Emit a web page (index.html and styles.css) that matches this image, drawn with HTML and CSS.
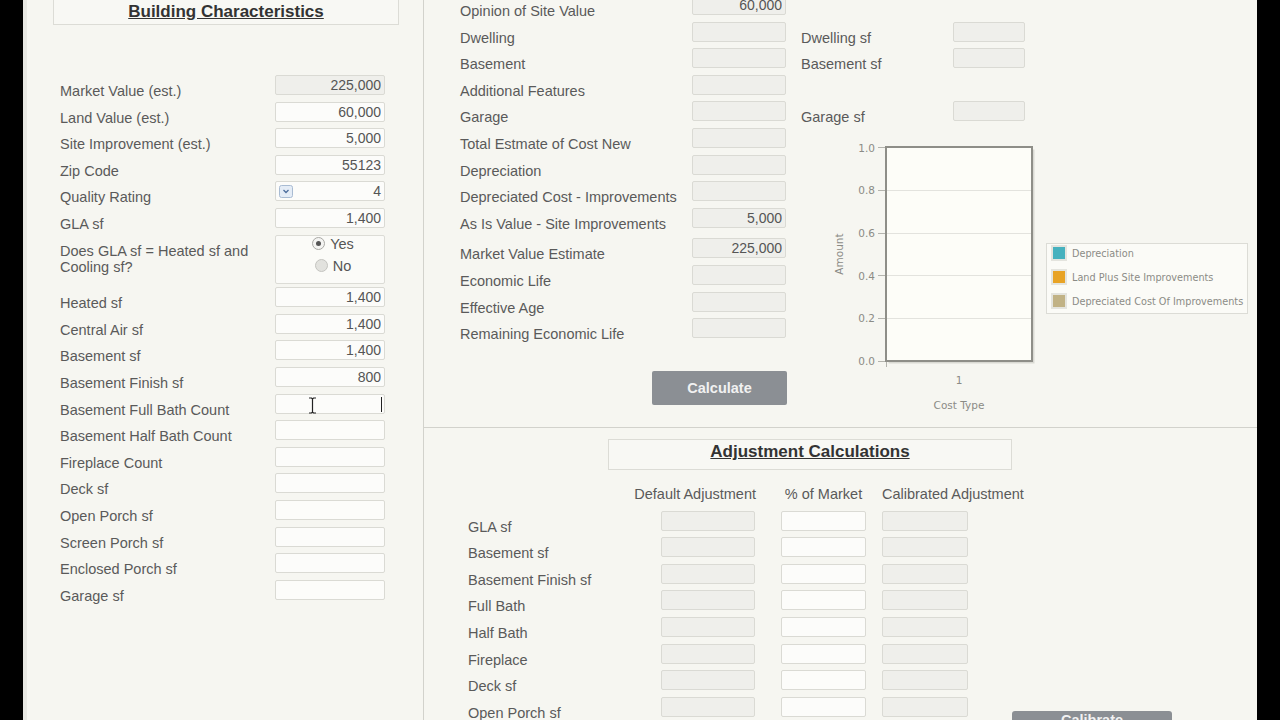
FILE: index.html
```html
<!DOCTYPE html>
<html lang="en">
<head>
    <meta charset="UTF-8">
    <meta name="viewport" content="width=device-width, initial-scale=1.0">
    <title>Cost Approach</title>
    <link rel="stylesheet" href="styles.css">
</head>
<body>

<div class="page">

    <!-- Building characteristics -->
    <div class="left-panel">
        <div class="section-title building-title"><span>Building Characteristics</span></div>

        <div class="form-grid building">
            <label>Market Value (est.)</label><input class="ro" value="225,000" readonly>
            <label>Land Value (est.)</label><input value="60,000">
            <label>Site Improvement (est.)</label><input value="5,000">
            <label>Zip Code</label><input value="55123">
            <label>Quality Rating</label>
            <div class="select">
                <svg class="dd-icon" width="14" height="13" viewBox="0 0 14 13">
                    <rect x="0.5" y="0.5" width="13" height="12" rx="2" fill="#e4ecf6" stroke="#a8bbd2"/>
                    <path d="M4.5 5 L7 7.5 L9.5 5" fill="none" stroke="#4b6c9c" stroke-width="1.3"/>
                </svg>
                <span>4</span>
            </div>
            <label>GLA sf</label><input value="1,400">
            <label class="wrap">Does GLA sf = Heated sf and Cooling sf?</label>
            <div class="radio-box">
                <div class="radio-item"><span class="radio checked"></span>Yes</div>
                <div class="radio-item"><span class="radio"></span>No</div>
            </div>
            <label>Heated sf</label><input value="1,400">
            <label>Central Air sf</label><input value="1,400">
            <label>Basement sf</label><input value="1,400">
            <label>Basement Finish sf</label><input value="800">
            <label>Basement Full Bath Count</label>
            <div class="field-wrap">
                <input value="">
                <span class="caret"></span>
                <svg class="ibeam" width="9" height="17" viewBox="0 0 9 17">
                    <path d="M1 1 H3.5 L4.5 2 L5.5 1 H8 M4.5 2 V15 M1 16 H3.5 L4.5 15 L5.5 16 H8" fill="none" stroke="#222" stroke-width="1.2"/>
                </svg>
            </div>
            <label>Basement Half Bath Count</label><input value="">
            <label>Fireplace Count</label><input value="">
            <label>Deck sf</label><input value="">
            <label>Open Porch sf</label><input value="">
            <label>Screen Porch sf</label><input value="">
            <label>Enclosed Porch sf</label><input value="">
            <label>Garage sf</label><input value="">
        </div>
    </div>

    <div class="main">

        <!-- Cost approach -->
        <div class="main-top">
            <div class="cost-col">
                <div class="form-grid cost">
                    <label>Opinion of Site Value</label><input class="ro" value="60,000" readonly>
                    <label>Dwelling</label><input class="ro" readonly>
                    <label>Basement</label><input class="ro" readonly>
                    <label>Additional Features</label><input class="ro" readonly>
                    <label>Garage</label><input class="ro" readonly>
                    <label>Total Estmate of Cost New</label><input class="ro" readonly>
                    <label>Depreciation</label><input class="ro" readonly>
                    <label>Depreciated Cost - Improvements</label><input class="ro" readonly>
                    <label>As Is Value - Site Improvements</label><input class="ro" value="5,000" readonly>
                    <label class="spaced">Market Value Estimate</label><input class="ro spaced" value="225,000" readonly>
                    <label>Economic Life</label><input class="ro" readonly>
                    <label>Effective Age</label><input class="ro" readonly>
                    <label>Remaining Economic Life</label><input class="ro" readonly>
                </div>
                <button class="btn calc-btn">Calculate</button>
            </div>

            <div class="sf-col">
                <div class="form-grid sf">
                    <span class="blank"></span>
                    <label>Dwelling sf</label><input class="ro" readonly>
                    <label>Basement sf</label><input class="ro" readonly>
                    <span class="blank"></span>
                    <label>Garage sf</label><input class="ro" readonly>
                </div>

                <svg class="chart" width="456" height="285" viewBox="0 0 456 285">
                    <g transform="translate(-801,-135)">
                        <rect x="888.5" y="149.5" width="146" height="214" fill="#d9d9d3"/>
                        <rect x="886" y="147" width="146" height="214" fill="#fdfdf8" stroke="#8e8e88" stroke-width="2"/>
                        <g stroke="#e3e3de" stroke-width="1">
                            <line x1="887" y1="190.5" x2="1031" y2="190.5"/>
                            <line x1="887" y1="233.5" x2="1031" y2="233.5"/>
                            <line x1="887" y1="275.5" x2="1031" y2="275.5"/>
                            <line x1="887" y1="318.5" x2="1031" y2="318.5"/>
                        </g>
                        <g stroke="#b4b4ae" stroke-width="1">
                            <line x1="878" y1="147.5" x2="885" y2="147.5"/>
                            <line x1="878" y1="190.5" x2="885" y2="190.5"/>
                            <line x1="878" y1="233.5" x2="885" y2="233.5"/>
                            <line x1="878" y1="275.5" x2="885" y2="275.5"/>
                            <line x1="878" y1="318.5" x2="885" y2="318.5"/>
                            <line x1="878" y1="361.5" x2="885" y2="361.5"/>
                            <line x1="886.5" y1="362" x2="886.5" y2="367"/>
                        </g>
                        <g class="axis-text" text-anchor="end">
                            <text x="875" y="152">1.0</text>
                            <text x="875" y="194">0.8</text>
                            <text x="875" y="237">0.6</text>
                            <text x="875" y="280">0.4</text>
                            <text x="875" y="322">0.2</text>
                            <text x="875" y="365">0.0</text>
                        </g>
                        <g class="axis-text" text-anchor="middle">
                            <text x="959" y="384">1</text>
                            <text x="959" y="409">Cost Type</text>
                            <text transform="translate(843,254) rotate(-90)">Amount</text>
                        </g>

                        <rect x="1046.5" y="243.5" width="201" height="70" fill="#fbfbf7" stroke="#dcdcd6"/>
                        <rect x="1051" y="245" width="16" height="16" fill="#e4e4de"/>
                        <rect x="1053" y="247" width="12" height="12" fill="#46b1be"/>
                        <rect x="1051" y="269" width="16" height="16" fill="#e4e4de"/>
                        <rect x="1053" y="271" width="12" height="12" fill="#e8a325"/>
                        <rect x="1051" y="293" width="16" height="16" fill="#e4e4de"/>
                        <rect x="1053" y="295" width="12" height="12" fill="#c1b285"/>
                        <g class="legend-text">
                            <text x="1072" y="257">Depreciation</text>
                            <text x="1072" y="281">Land Plus Site Improvements</text>
                            <text x="1072" y="305">Depreciated Cost Of Improvements</text>
                        </g>
                    </g>
                </svg>
            </div>
        </div>

        <!-- Adjustments -->
        <div class="main-bottom">
            <div class="section-title adj-title"><span>Adjustment Calculations</span></div>

            <div class="adj-grid">
                <span></span>
                <div class="col-head head-default"><span>Default Adjustment</span></div>
                <div class="col-head head-pct">% of Market</div>
                <div class="col-head head-cal">Calibrated Adjustment</div>
                <span></span>

                <label>GLA sf</label><input class="ro" readonly><input class="pct"><input class="ro cal" readonly><span></span>
                <label>Basement sf</label><input class="ro" readonly><input class="pct"><input class="ro cal" readonly><span></span>
                <label>Basement Finish sf</label><input class="ro" readonly><input class="pct"><input class="ro cal" readonly><span></span>
                <label>Full Bath</label><input class="ro" readonly><input class="pct"><input class="ro cal" readonly><span></span>
                <label>Half Bath</label><input class="ro" readonly><input class="pct"><input class="ro cal" readonly><span></span>
                <label>Fireplace</label><input class="ro" readonly><input class="pct"><input class="ro cal" readonly><span></span>
                <label>Deck sf</label><input class="ro" readonly><input class="pct"><input class="ro cal" readonly><span></span>
                <label>Open Porch sf</label><input class="ro" readonly><input class="pct"><input class="ro cal" readonly>
                <button class="btn save-btn">Calibrate Adjustments</button>
                <label>Screen Porch sf</label><input class="ro" readonly><input class="pct"><input class="ro cal" readonly><span></span>
                <label>Enclosed Porch sf</label><input class="ro" readonly><input class="pct"><input class="ro cal" readonly><span></span>
            </div>
        </div>
    </div>
</div>

</body>
</html>
```

FILE: styles.css
```css
* {
    box-sizing: border-box;
}
html, body {
    margin: 0;
    height: 100%;
}
body {
    background: #000;
    font-family: "Liberation Sans", Arial, sans-serif;
    font-size: 14.5px;
    color: #5a5a5a;
    overflow: hidden;
}
.page {
    width: 1234px;
    height: 720px;
    margin-left: 23px;
    background: #f6f6f1;
    border-left: 4px solid #e8e8e3;
    display: flex;
    overflow: hidden;
}

/* shared bits */
.section-title {
    border: 1px solid #dcdcd6;
    background: #f8f8f4;
    text-align: center;
    font-weight: bold;
    font-size: 17px;
    line-height: 20px;
    color: #333;
}
.section-title span {
    text-decoration: underline;
}
.form-grid {
    display: grid;
    row-gap: 0.6px;
}
label {
    padding-top: 6px;
    line-height: 20px;
    white-space: nowrap;
}
input {
    font-family: inherit;
    font-size: 14px;
    color: #555;
    width: 100%;
    height: 20px;
    padding: 0 3px;
    border: 1px solid #dadad4;
    border-radius: 2px;
    background: #fcfcfa;
    text-align: right;
    outline: none;
    align-self: start;
}
input.ro {
    background: #efefeb;
}
.btn {
    font-family: inherit;
    font-size: 14.5px;
    font-weight: bold;
    color: #f1f1f1;
    background: #8b8f94;
    border: none;
    border-radius: 2px;
}

/* left panel */
.left-panel {
    width: 397px;
    flex: none;
    border-right: 1px solid #d2d2cc;
}
.building-title {
    width: 346px;
    height: 35px;
    margin: -10px 0 0 26px;
    padding-top: 11px;
}
.building {
    grid-template-columns: 215px 110px;
    margin: 50px 0 0 33px;
}
.select {
    height: 20px;
    border: 1px solid #dadad4;
    border-radius: 2px;
    background: #fcfcfa;
    display: flex;
    align-items: center;
    justify-content: space-between;
    padding: 0 3px 0 3px;
    font-size: 14px;
    color: #555;
}
.dd-icon {
    display: block;
}
label.wrap {
    white-space: normal;
    padding-top: 8px;
    line-height: 16px;
}
.radio-box {
    height: 49px;
    margin-bottom: 3px;
    border: 1px solid #dcdcd6;
    border-radius: 2px;
    background: #fbfbf8;
    display: flex;
    flex-direction: column;
    align-items: center;
    padding-left: 6px;
}
.radio-item {
    display: flex;
    align-items: center;
    gap: 5px;
    line-height: 22px;
    color: #555;
}
.radio-item:first-child {
    margin-top: -3px;
}
.radio {
    width: 13px;
    height: 13px;
    border-radius: 50%;
    border: 1px solid #c4c4c0;
    background: #e2e2de;
    display: flex;
    align-items: center;
    justify-content: center;
}
.radio.checked {
    background: #f4f4f2;
    border-color: #a9a9a5;
}
.radio.checked::after {
    content: "";
    width: 5px;
    height: 5px;
    border-radius: 50%;
    background: #555;
}
.field-wrap {
    position: relative;
    height: 20px;
}
.caret {
    position: absolute;
    right: 3px;
    top: 3px;
    width: 1px;
    height: 15px;
    background: #222;
}
.ibeam {
    position: absolute;
    left: 33px;
    top: 3px;
}

/* main area */
.main {
    flex: 1;
    display: flex;
    flex-direction: column;
}
.main-top {
    height: 428px;
    flex: none;
    border-bottom: 1px solid #d2d2cc;
    display: flex;
}
.cost-col {
    width: 377px;
    padding-left: 36px;
}
.cost {
    grid-template-columns: 232px 94px;
    margin-top: -5px;
}
.cost .spaced {
    margin-top: 4px;
}
.calc-btn {
    display: block;
    width: 135px;
    height: 34px;
    margin: 27px 0 0 192px;
}
.sf-col {
    flex: 1;
}
.sf {
    grid-template-columns: 152px 72px;
    margin-top: -5px;
}
.blank {
    grid-column: 1 / 3;
    height: 26px;
}
.chart {
    display: block;
    margin-top: 8px;
}
.axis-text text {
    font-family: "DejaVu Sans", Verdana, sans-serif;
    font-size: 10.5px;
    fill: #8b8b86;
}
.legend-text text {
    font-family: "DejaVu Sans", Verdana, sans-serif;
    font-size: 9.7px;
    fill: #8b8b86;
}

/* adjustments */
.adj-title {
    width: 404px;
    height: 31px;
    margin: 11px 0 0 184px;
    padding-top: 2px;
}
.adj-grid {
    display: grid;
    grid-template-columns: 193px 120px 101px 86px 1fr;
    row-gap: 0.6px;
    margin: 14px 0 0 44px;
}
.adj-grid input {
    width: 94px;
}
.adj-grid input.pct {
    width: 85px;
}
.adj-grid input.cal {
    width: 86px;
}
.col-head {
    line-height: 20px;
    height: 26px;
    white-space: nowrap;
}
.head-default {
    width: 95px;
    display: flex;
    justify-content: flex-end;
}
.head-pct {
    width: 85px;
    text-align: center;
}
.save-btn {
    width: 160px;
    height: 30px;
    margin: 14px 0 0 44px;
    align-self: start;
    border-radius: 3px;
}
```
